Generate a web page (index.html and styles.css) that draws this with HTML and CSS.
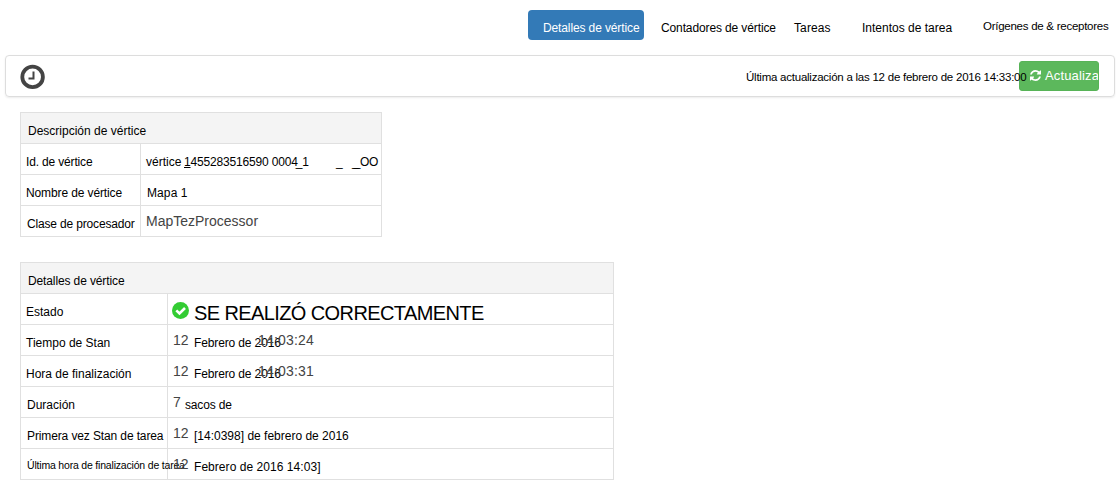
FILE: index.html
```html
<!DOCTYPE html>
<html lang="es">
<head>
<meta charset="utf-8">
<title>Detalles de vértice</title>
<link rel="stylesheet" href="styles.css">
</head>
<body>
<nav class="tabs">
  <a class="tab tab-active"><span class="t-details">Detalles de vértice</span></a>
  <a class="tab tab-counters"><span class="t-counters">Contadores de vértice</span></a>
  <a class="tab tab-tasks"><span class="t-tasks">Tareas</span></a>
  <a class="tab tab-attempts"><span class="t-attempts">Intentos de tarea</span></a>
  <a class="tab tab-sources"><span class="t-sources">Orígenes de &amp; receptores</span></a>
</nav>
<header class="bar">
  <svg class="clock" width="26" height="26" viewBox="0 0 26 26"><circle cx="12.600" cy="12.900" r="10.300" fill="none" stroke="#444" stroke-width="3.800"/><path d="M13.500 7.500v7H8.500" fill="none" stroke="#444" stroke-width="2"/></svg>
  <div class="updated"><span class="t-updated">Última actualización a las 12 de febrero de 2016 14:33:00</span></div>
  <button class="refresh">
    <svg width="11" height="11" viewBox="0 0 1536 1536"><path fill="#fff" d="M1511 928q0 5-1 7-64 268-268 434.500T764 1536q-146 0-282.500-55T238 1324l-129 129q-19 19-45 19t-45-19-19-45V960q0-26 19-45t45-19h448q26 0 45 19t19 45-19 45l-137 137q71 66 161 102t187 36q134 0 250-65t186-179q11-17 53-117 8-23 30-23h192q13 0 22.500 9.500t9.500 22.500zm25-800v448q0 26-19 45t-45 19h-448q-26 0-45-19t-19-45 19-45l138-138Q969 256 768 256q-134 0-250 65T332 500q-11 17-53 117-8 23-30 23H50q-13 0-22.500-9.500T18 608v-7q65-268 270-434.500T768 0q146 0 284 55.500T1297 212l130-129q19-19 45-19t45 19 19 45z"/></svg>
    <span class="t-refresh">Actualizar</span>
  </button>
</header>
<main>
  <section class="panel description">
    <h2 class="head"><span class="t-desc">Descripción de vértice</span></h2>
    <div class="row">
      <div class="label"><span class="t-id">Id. de vértice</span></div>
      <div class="value id-value"><span class="t-vertex">vértice</span><span class="t-number"><u>1</u>455283516590 0004<i class="joined">_</i>1</span><span class="t-gap">_</span><span class="t-rule">__</span><span class="t-tail">OO</span></div>
    </div>
    <div class="row">
      <div class="label"><span class="t-name">Nombre de vértice</span></div>
      <div class="value"><span class="t-map">Mapa 1</span></div>
    </div>
    <div class="row">
      <div class="label inset"><span class="t-class">Clase de procesador</span></div>
      <div class="value"><span class="big t-processor">MapTezProcessor</span></div>
    </div>
  </section>
  <section class="panel details">
    <h2 class="head"><span class="t-det">Detalles de vértice</span></h2>
    <div class="row">
      <div class="label"><span class="t-state">Estado</span></div>
      <div class="value status"><svg class="check" width="17" height="17" viewBox="0 0 17 17"><circle cx="8.500" cy="8.500" r="8.500" fill="#3c3"/><path d="M4.300 8.300l3.200 3.200L13 6" fill="none" stroke="#fff" stroke-width="2.600"/></svg><span class="t-success">SE REALIZÓ CORRECTAMENTE</span></div>
    </div>
    <div class="row">
      <div class="label"><span class="t-start">Tiempo de Stan</span></div>
      <div class="value"><span class="big day">12</span><span class="date">Febrero de 2016</span><span class="big time">14:03:24</span></div>
    </div>
    <div class="row">
      <div class="label"><span class="t-end">Hora de finalización</span></div>
      <div class="value"><span class="big day">12</span><span class="date">Febrero de 2016</span><span class="big time">14:03:31</span></div>
    </div>
    <div class="row">
      <div class="label inset"><span class="t-duration">Duración</span></div>
      <div class="value"><span class="big seven">7</span><span class="t-sacks">sacos de</span></div>
    </div>
    <div class="row">
      <div class="label inset"><span class="t-first">Primera vez Stan de tarea</span></div>
      <div class="value"><span class="big day">12</span><span class="t-firstdate">[14:0398] de febrero de 2016</span></div>
    </div>
    <div class="row">
      <div class="label inset"><span class="t-last">Última hora de finalización de tarea</span></div>
      <div class="value"><span class="big day">12</span><span class="t-lastdate">Febrero de 2016 14:03]</span></div>
    </div>
  </section>
</main>
</body>
</html>
```
FILE: styles.css
```css
* { box-sizing: border-box; }
body {
  margin: 0;
  width: 1116px;
  height: 493px;
  overflow: hidden;
  background: #fff;
  color: #000;
  font: 12px/14px "Liberation Sans", Arial, sans-serif;
}
span { display: block; flex: none; white-space: nowrap; }

.tabs { display: flex; padding: 10px 0 0 528px; height: 55px; }
.tab { flex: none; height: 30px; padding-top: 11px; }
.tab-active { width: 116px; padding-left: 15px; border-radius: 4px; background: #337ab7; color: #fff; }
.tab-counters { width: 133px; margin-left: 17px; }
.tab-tasks { width: 68px; }
.tab-attempts { width: 121px; }
.tab-sources { padding-top: 9px; }
.t-details, .t-counters, .t-det, .t-first { letter-spacing: -.12px; }
.t-tasks { letter-spacing: .12px; }
.t-sources { font-size: 11.5px; letter-spacing: -.26px; }

.bar {
  display: flex;
  width: 1110px;
  height: 42px;
  margin-left: 5px;
  padding: 5px 15px 5px 14px;
  border: 1px solid #ddd;
  border-radius: 4px;
  box-shadow: 0 1px 2px rgba(0, 0, 0, .08);
}
.clock { margin-top: 3px; }
.updated { position: relative; z-index: 1; width: 273px; margin: 9px 0 0 auto; }
.t-updated { font-size: 11.5px; letter-spacing: -.24px; }
.refresh {
  display: flex;
  gap: 4px;
  width: 80px;
  height: 30px;
  padding: 0 0 0 10px;
  overflow: hidden;
  border: 1px solid #57b357;
  border-radius: 3px;
  background: #5cb85c;
  color: #fff;
  font: 13px/16px "Liberation Sans", Arial, sans-serif;
}
.refresh svg { flex: none; margin-top: 8px; }
.t-refresh { margin-top: 6px; letter-spacing: .15px; }

.panel { border: 1px solid #e0e0e0; }
.description { width: 362px; margin: 15px 0 0 20px; }
.details { width: 594px; margin: 25px 0 0 20px; }
.head { height: 30px; margin: 0; padding: 11px 0 0 7px; background: #f4f4f4; font: inherit; }
.row { display: flex; height: 31px; border-top: 1px solid #e0e0e0; }
.label { flex: none; width: 120px; padding: 11px 0 0 5px; border-right: 1px solid #e0e0e0; }
.details .label { width: 147px; }
.inset { padding-left: 6px; }
.value { display: flex; padding: 11px 0 0 5px; }
.big { color: #444; font-size: 14px; line-height: 16px; margin-top: -4px; }
.t-map { margin-left: 1px; letter-spacing: .1px; }
.t-id, .t-class { letter-spacing: -.16px; }
.t-name { letter-spacing: -.12px; }

.t-vertex { width: 38px; }
.t-number { width: 152px; letter-spacing: -.17px; }
.joined { margin-left: -2px; font-style: normal; }
.t-gap { width: 16px; }
.t-rule { width: 8px; letter-spacing: -5px; }
.t-tail { letter-spacing: -.3px; }

.status { padding-top: 7px; }
.check { margin: 1px 5px 0 -1px; }
.t-success { font-size: 20px; line-height: 24px; letter-spacing: -.6px; }
.day { width: 21px; }
.date { width: 64px; letter-spacing: -.13px; }
.time { letter-spacing: .18px; }
.seven { width: 12px; }
.t-sacks { letter-spacing: -.15px; }
.t-last { margin-top: -2px; font-size: 10.5px; letter-spacing: -.19px; }
.t-lastdate { letter-spacing: .05px; }
```
